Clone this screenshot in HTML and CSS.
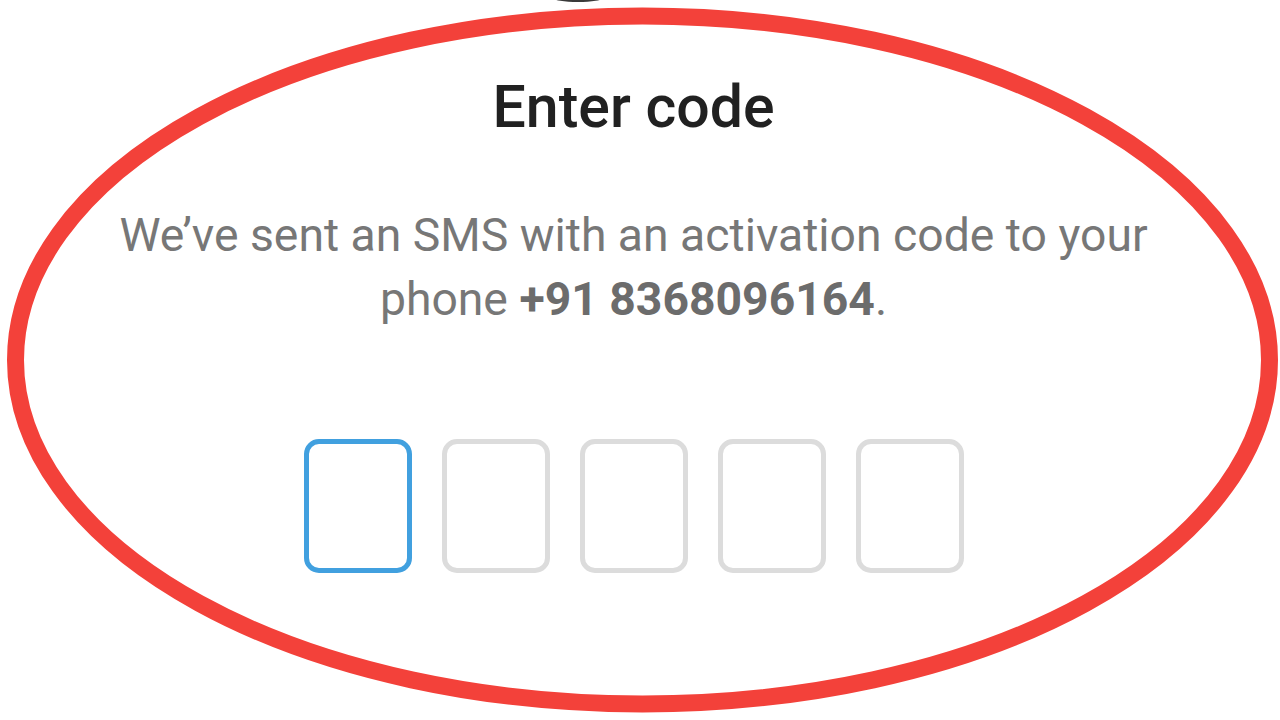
FILE: index.html
```html
<!DOCTYPE html>
<html>
<head>
<meta charset="utf-8">
<link rel="stylesheet" href="styles.css">
</head>
<body>
<main class="screen">
  <h1 class="title">Enter code</h1>
  <p class="message">We’ve sent an SMS with an activation code to your<br>phone <strong class="phone">+91 8368096164</strong>.</p>
  <div class="code-row">
    <div class="code-box active"></div>
    <div class="code-box"></div>
    <div class="code-box"></div>
    <div class="code-box"></div>
    <div class="code-box"></div>
  </div>
  <div class="top-blob"></div>
  <svg class="ring" width="1280" height="720" viewBox="0 0 1280 720">
    <ellipse cx="642.5" cy="360" rx="627" ry="344" fill="none" stroke="#f3413a" stroke-width="17"/>
  </svg>
</main>
</body>
</html>
```
FILE: styles.css
```css
html, body {
  margin: 0;
  padding: 0;
  background: #ffffff;
}
.screen {
  position: relative;
  box-sizing: border-box;
  width: 1280px;
  height: 720px;
  padding-right: 13px;
  overflow: hidden;
  display: flex;
  flex-direction: column;
  align-items: center;
  font-family: Roboto, "Liberation Sans", sans-serif;
}
.title {
  margin: 72px 0 0 0;
  font-size: 59px;
  line-height: 70px;
  font-weight: 500;
  color: #212121;
}
.message {
  margin: 61px 0 0 0;
  font-size: 46.3px;
  line-height: 64px;
  color: #777777;
  text-align: center;
  white-space: nowrap;
}
.phone {
  font-weight: 700;
  color: #6c6c6c;
}
.code-row {
  display: flex;
  gap: 30px;
  margin-top: 108px;
}
.code-box {
  box-sizing: border-box;
  width: 108px;
  height: 134px;
  border: 5px solid #dcdcdc;
  border-radius: 15px;
}
.code-box.active {
  border-color: #41a0df;
}
.top-blob {
  position: absolute;
  left: 553px;
  top: -6px;
  width: 50px;
  height: 8px;
  border-radius: 50%;
  background: #3a3a3a;
}
.ring {
  position: absolute;
  left: 0;
  top: 0;
}
```
